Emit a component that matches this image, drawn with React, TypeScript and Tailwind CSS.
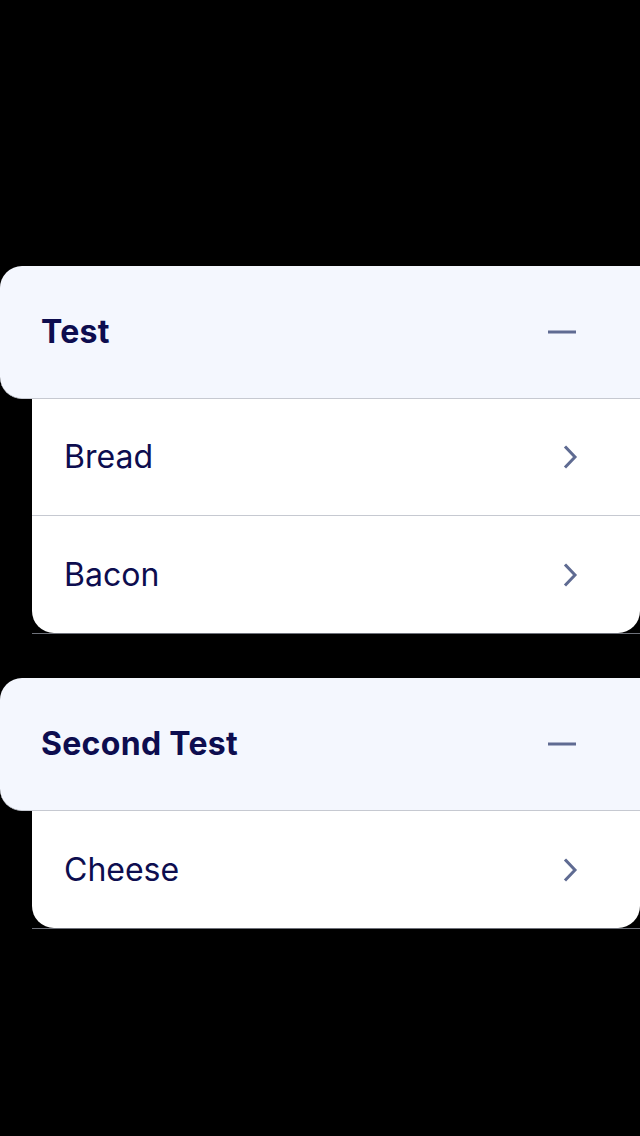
import React from "react";

const Minus = () => (
  <svg width="30" height="6" viewBox="0 0 30 6" className="block">
    <rect x="1" y="1.5" width="28" height="3" fill="#5f6b92" />
  </svg>
);

const Chevron = () => (
  <svg width="16" height="24" viewBox="0 0 16 24" className="block">
    <path d="M3 2.5 L12 12 L3 21.5" fill="none" stroke="#5f6b92" strokeWidth="3" strokeLinecap="square" />
  </svg>
);

function Section({ title, items }: { title: string; items: string[] }) {
  return (
    <div className="flex flex-col">
      <div className="h-[133px] bg-[#f4f7fe] rounded-l-[22px] flex items-center justify-between pl-[41px] pr-[63px] border-b border-[#c6c9d1]">
        <span className="text-[32px] font-bold text-[#0d0d4f] tracking-[0.3px]">{title}</span>
        <Minus />
      </div>
      <div className="ml-[32px] flex flex-col">
        <div className="bg-white rounded-b-[22px] flex flex-col">
          {items.map((it, i) => (
            <div
              key={it}
              className={`h-[117px] flex items-center justify-between pl-[33px] pr-[61px] ${
                i < items.length - 1 ? "border-b border-[#c6c9d1]" : ""
              }`}
            >
              <span className="text-[32px] text-[#0d0d4f] -ml-px">{it}</span>
              <Chevron />
            </div>
          ))}
        </div>
        <div className="h-px bg-[#6e717a]" />
      </div>
    </div>
  );
}

export default function App() {
  return (
    <div
      className="w-[640px] h-[1136px] bg-black pt-[266px] flex flex-col gap-[44px]"
      style={{ fontFamily: "Inter, 'Noto Sans', sans-serif" }}
    >
      <Section title="Test" items={["Bread", "Bacon"]} />
      <Section title="Second Test" items={["Cheese"]} />
    </div>
  );
}
